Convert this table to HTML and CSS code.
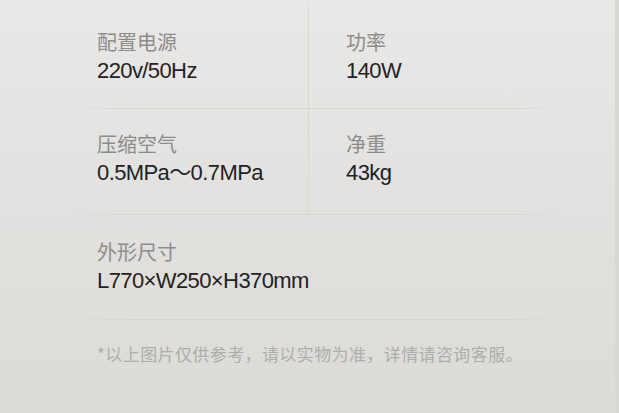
FILE: index.html
```html
<!DOCTYPE html>
<html lang="zh">
<head>
<meta charset="utf-8">
<link rel="stylesheet" href="styles.css">
</head>
<body>
<div class="page">
  <div class="specs">
    <div class="row">
      <div class="cell first">
        <div class="label">配置电源</div>
        <div class="value">220v/50Hz</div>
      </div>
      <div class="cell second">
        <div class="label">功率</div>
        <div class="value">140W</div>
      </div>
    </div>
    <div class="row">
      <div class="cell first">
        <div class="label">压缩空气</div>
        <div class="value">0.5MPa～0.7MPa</div>
      </div>
      <div class="cell second">
        <div class="label">净重</div>
        <div class="value">43kg</div>
      </div>
    </div>
    <div class="row single">
      <div class="cell first">
        <div class="label">外形尺寸</div>
        <div class="value">L770×W250×H370mm</div>
      </div>
    </div>
  </div>
  <p class="note">*以上图片仅供参考，请以实物为准，详情请咨询客服。</p>
</div>
</body>
</html>
```
FILE: styles.css
```css
html, body {
  margin: 0;
  padding: 0;
}
body {
  width: 619px;
  height: 413px;
  overflow: hidden;
  background: linear-gradient(180deg, #e9e8e6 0%, #e2e1df 50%, #dcdbd8 100%);
  font-family: "Liberation Sans", "Noto Sans CJK SC", sans-serif;
}
.page {
  height: 413px;
  border-right: 4px solid #d9d8d5;
  box-sizing: border-box;
}
.specs {
  margin: 0 50px 0 68px;
}
.row {
  display: grid;
  grid-template-columns: 241px 1fr;
  border-bottom: 1px solid #d6d5d2;
  border-image: linear-gradient(90deg, rgba(214,213,210,0) 0%, #d5d4d1 12%, #d5d4d1 88%, rgba(214,213,210,0) 100%) 1;
}
.row:nth-child(1) { height: 108px; }
.row:nth-child(2) { height: 105px; }
.row:nth-child(3) { height: 104px; }
.cell.first {
  padding-left: 29px;
  background: linear-gradient(#d8d7d4, #d8d7d4) right bottom / 1px 100% no-repeat;
}
.row:nth-child(1) .cell.first {
  background: linear-gradient(rgba(216,215,212,0), #d8d7d4 14px) right bottom / 1px 100% no-repeat;
}
.row:nth-child(1) .cell { padding-top: 28px; }
.row:nth-child(2) .cell { padding-top: 21px; }
.row:nth-child(3) .cell { padding-top: 23px; }
.row.single .cell.first { background: none; }
.cell.second {
  padding-left: 37px;
}
.label {
  font-family: "Noto Sans CJK SC", sans-serif;
  font-size: 20px;
  font-weight: 400;
  line-height: 28px;
  color: #8c8c8c;
}
.value {
  font-size: 22px;
  line-height: 30px;
  letter-spacing: -0.6px;
  color: #222;
  margin-top: 0;
}
.note {
  margin: 22px 0 0 97px;
  font-family: "Noto Sans CJK SC", sans-serif;
  font-size: 17px;
  font-weight: 400;
  letter-spacing: 0.4px;
  line-height: 24px;
  color: #adadad;
}
```
